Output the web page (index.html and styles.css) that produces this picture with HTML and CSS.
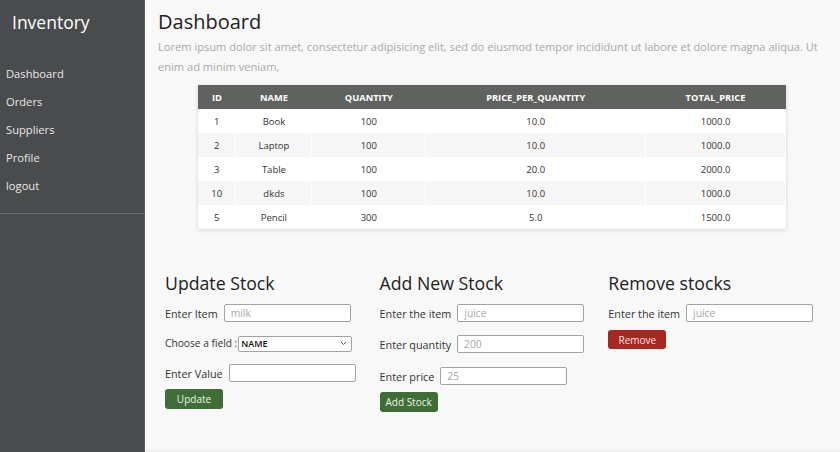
FILE: index.html
```html
<!DOCTYPE html>
<html lang="en">
<head>
<meta charset="utf-8">
<title>Inventory</title>
<link rel="stylesheet" href="styles.css">
</head>
<body>
<div class="layout">
  <aside class="sidebar">
    <h1 class="brand">Inventory</h1>
    <nav class="nav">
      <a href="#">Dashboard</a>
      <a href="#">Orders</a>
      <a href="#">Suppliers</a>
      <a href="#">Profile</a>
      <a href="#">logout</a>
    </nav>
  </aside>
  <main class="main">
    <h2 class="title">Dashboard</h2>
    <p class="lead">Lorem ipsum dolor sit amet, consectetur adipisicing elit, sed do eiusmod tempor incididunt ut labore et dolore magna aliqua. Ut enim ad minim veniam,</p>
    <table class="stock-table">
      <thead>
        <tr><th class="c-id">ID</th><th class="c-name">NAME</th><th class="c-qty">QUANTITY</th><th class="c-ppq">PRICE_PER_QUANTITY</th><th class="c-total">TOTAL_PRICE</th></tr>
      </thead>
      <tbody>
        <tr><td>1</td><td>Book</td><td>100</td><td>10.0</td><td>1000.0</td></tr>
        <tr><td>2</td><td>Laptop</td><td>100</td><td>10.0</td><td>1000.0</td></tr>
        <tr><td>3</td><td>Table</td><td>100</td><td>20.0</td><td>2000.0</td></tr>
        <tr><td>10</td><td>dkds</td><td>100</td><td>10.0</td><td>1000.0</td></tr>
        <tr><td>5</td><td>Pencil</td><td>300</td><td>5.0</td><td>1500.0</td></tr>
      </tbody>
    </table>
    <div class="forms">
      <section class="form form-update">
        <h3 class="form-title">Update Stock</h3>
        <div class="row"><label>Enter Item</label><input type="text" placeholder="milk"></div>
        <div class="row"><label class="tight">Choose a field :</label><span class="select-wrap"><select><option>NAME</option></select><svg class="chev" width="7" height="5" viewBox="0 0 7 5"><path d="M1 1l2.5 2.5L6 1" fill="none" stroke="#555" stroke-width="1"/></svg></span></div>
        <div class="row"><label>Enter Value</label><input type="text"></div>
        <button class="btn btn-green">Update</button>
      </section>
      <section class="form form-add">
        <h3 class="form-title">Add New Stock</h3>
        <div class="row"><label>Enter the item</label><input type="text" placeholder="juice"></div>
        <div class="row"><label>Enter quantity</label><input type="text" placeholder="200"></div>
        <div class="row"><label>Enter price</label><input type="text" placeholder="25"></div>
        <button class="btn btn-green">Add Stock</button>
      </section>
      <section class="form form-remove">
        <h3 class="form-title">Remove stocks</h3>
        <div class="row"><label>Enter the item</label><input type="text" placeholder="juice"></div>
        <button class="btn btn-red">Remove</button>
      </section>
    </div>
  </main>
</div>
</body>
</html>
```

FILE: styles.css
```css
* { box-sizing: border-box; }
html, body { margin: 0; padding: 0; height: 100%; }
body {
  font-family: "Open Sans", "Liberation Sans", sans-serif;
  background: #f8f8f8;
  color: #2a2a2a;
}
.layout {
  display: flex;
  min-height: 452px;
}
.sidebar {
  width: 145px;
  flex: 0 0 145px;
  background: #4a4b4c;
  border-right: 1px solid #5c5d5e;
}
.brand {
  margin: 0;
  padding: 10px 0 10px 12px;
  line-height: 24px;
  font-size: 17.5px;
  font-weight: 400;
  color: #ffffff;
}
.nav {
  display: flex;
  flex-direction: column;
  margin-top: 16px;
  padding-bottom: 13px;
  border-bottom: 1px solid #5d6a74;
}
.nav a {
  display: block;
  padding-left: 6px;
  line-height: 28px;
  font-size: 11.2px;
  color: #e8e8e8;
  text-decoration: none;
}
.main {
  flex: 1;
  padding: 8px 14px 0 13px;
  border-bottom: 3px solid #f1f1f1;
}
.title {
  margin: 0;
  line-height: 28px;
  font-size: 20px;
  font-weight: 400;
  color: #222;
}
.lead {
  margin: 1px 0 0;
  line-height: 20px;
  font-size: 11.1px;
  color: #a9a9a9;
}
.stock-table {
  width: 588px;
  margin: 8px auto 0;
  border-collapse: collapse;
  background: #fff;
  box-shadow: 0 1px 4px rgba(0,0,0,0.15);
  font-size: 9.5px;
  text-align: center;
}
.stock-table th {
  background: #5f625f;
  color: #fff;
  font-weight: 700;
  height: 24px;
  padding: 0;
  font-size: 9.3px;
}
.stock-table td {
  height: 24px;
  padding: 0;
  color: #333;
  border-right: 1px solid #fff;
}
.stock-table tbody tr:nth-child(even) td { background: #f6f6f6; }
.c-id { width: 38px; }
.c-name { width: 76px; }
.c-qty { width: 114px; }
.c-ppq { width: 220px; }
.c-total { width: 140px; }
.forms {
  display: flex;
  gap: 24px;
  margin-top: 42px;
  padding-left: 7px;
}
.form-title {
  margin: 0 0 9px;
  line-height: 24px;
  font-size: 17.7px;
  font-weight: 400;
  color: #222;
}
.row {
  display: flex;
  align-items: center;
  height: 18px;
  margin-bottom: 12px;
  font-size: 10.8px;
  color: #333;
}
.row label { margin-right: 6px; white-space: nowrap; }
.row label.tight { margin-right: 1px; font-size: 10.2px; }
.row input {
  width: 127px;
  height: 18px;
  border: 1px solid #a3a3a3;
  border-radius: 2px;
  padding: 0 6px;
  font-family: inherit;
  font-size: 10.3px;
  background: #fff;
}
.row input::placeholder { color: #a8a8a8; }
.select-wrap {
  position: relative;
  display: inline-block;
  height: 16px;
}
.select-wrap select {
  -webkit-appearance: none;
  appearance: none;
  width: 114px;
  height: 16px;
  border: 1px solid #a3a3a3;
  border-radius: 2px;
  padding: 0 2px;
  font-family: inherit;
  font-size: 9px;
  font-weight: 600;
  background: #fff;
  color: #111;
}
.chev {
  position: absolute;
  right: 5px;
  top: 6px;
  pointer-events: none;
}
.form-update .row:nth-of-type(3) { margin-bottom: 7px; }
.form-add .row:nth-of-type(1) { margin-bottom: 13px; }
.form-add .row:nth-of-type(2) { margin-bottom: 14px; }
.form-add .row:nth-of-type(3) { margin-bottom: 7px; }
.form-remove .row { margin-bottom: 8px; }
.btn {
  display: block;
  width: 58px;
  height: 20px;
  border: 0;
  border-radius: 3px;
  color: #eef3ea;
  font-family: inherit;
  font-size: 10px;
  padding: 0;
}
.btn-green { background: #3e6e35; }
.btn-red { background: #a8271f; height: 19px; color: #f5e6e4; }
```
